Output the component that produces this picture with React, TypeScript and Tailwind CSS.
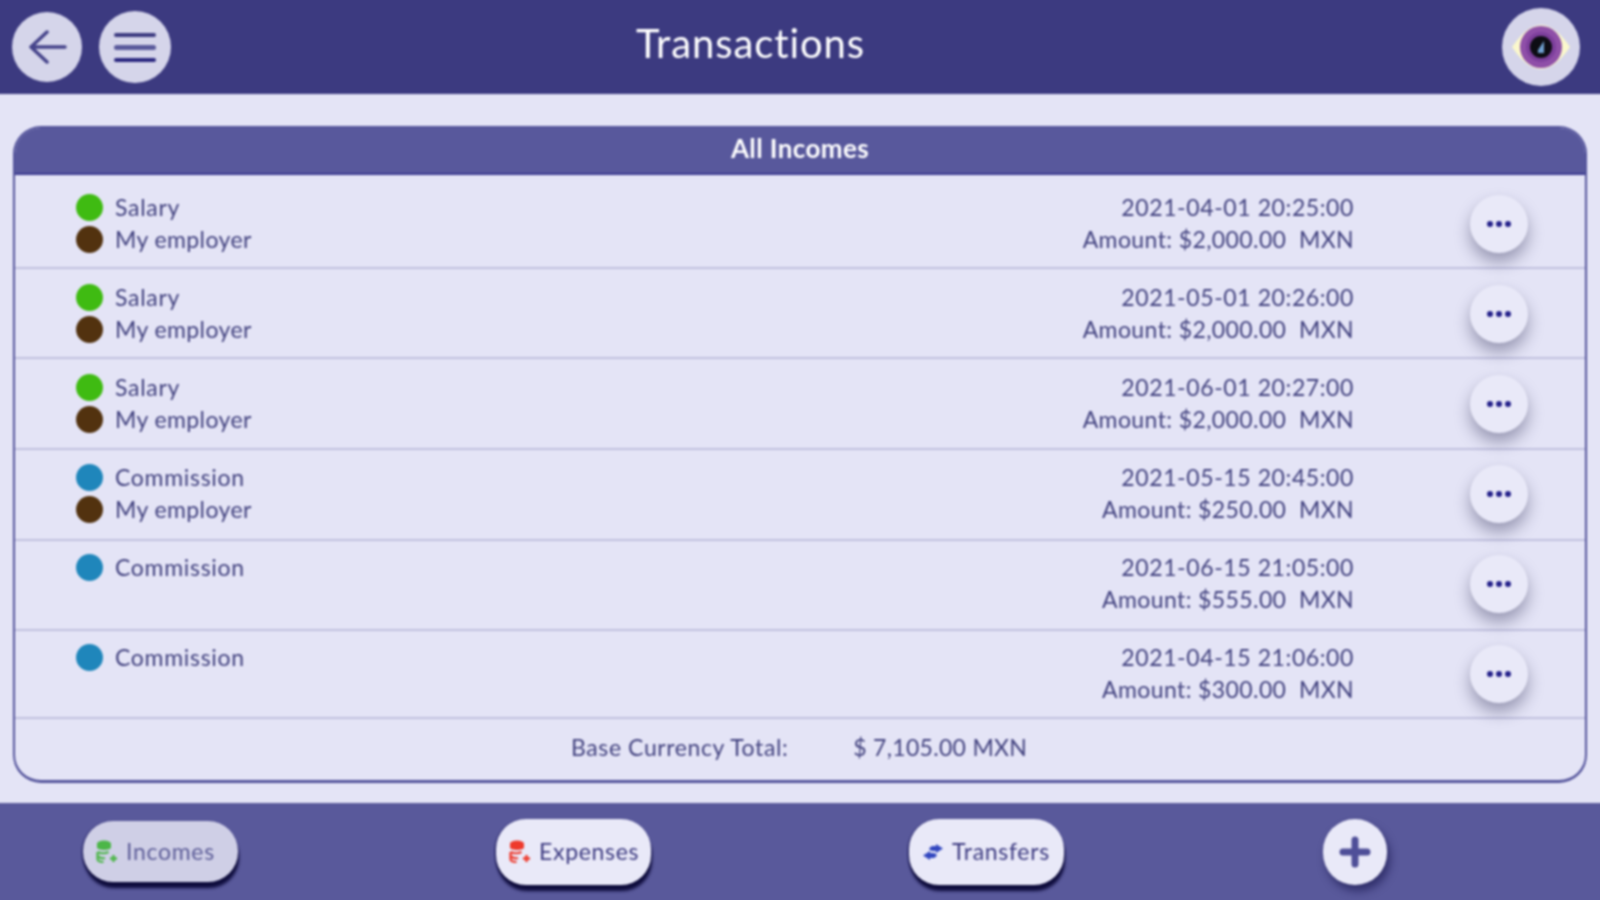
import React from "react"

const rows = [
  { cat: "Salary", dot: "bg-[#3fbb12]", who: "My employer", date: "2021-04-01 20:25:00", amount: "$2,000.00", box: "h-[94px] pt-[16px]" },
  { cat: "Salary", dot: "bg-[#3fbb12]", who: "My employer", date: "2021-05-01 20:26:00", amount: "$2,000.00", box: "h-[90px] pt-[12px]" },
  { cat: "Salary", dot: "bg-[#3fbb12]", who: "My employer", date: "2021-06-01 20:27:00", amount: "$2,000.00", box: "h-[91px] pt-[12px]" },
  { cat: "Commission", dot: "bg-[#1f86bb]", who: "My employer", date: "2021-05-15 20:45:00", amount: "$250.00", box: "h-[91px] pt-[11px]" },
  { cat: "Commission", dot: "bg-[#1f86bb]", who: "", date: "2021-06-15 21:05:00", amount: "$555.00", box: "h-[90px] pt-[10px]" },
  { cat: "Commission", dot: "bg-[#1f86bb]", who: "", date: "2021-04-15 21:06:00", amount: "$300.00", box: "h-[88px] pt-[10px]" },
]

function StackIcon({ color }: { color: string }) {
  return (
    <svg width="22" height="24" viewBox="0 0 22 24" fill="none">
      <ellipse cx="8" cy="3.5" rx="7" ry="3" fill={color} />
      <rect x="1" y="3.5" width="14" height="4" fill={color} />
      <ellipse cx="8" cy="7.5" rx="7" ry="2.5" fill={color} />
      <path d="M1.5 12c3 1.5 8 1.5 11 0M1.5 12v7c0 2 3 3 6 3M2 16.5c2 1.5 5 2 7 1.5" stroke={color} strokeWidth="2.2" />
      <path d="M14 18.5h7M17.5 15v7" stroke={color} strokeWidth="2.4" />
    </svg>
  )
}

function TransferIcon() {
  return (
    <svg width="22" height="18" viewBox="0 0 22 18" fill="#3348c0">
      <path d="M7 6c1-2.5 3-3 5-3h2V1l7 4.5L14 10V8h-2c-2 0-3 0-5-2Z" />
      <path d="M15 12c-1 2.5-3 3-5 3H8v2l-7-4.5L8 8v2h2c2 0 3 0 5 2Z" />
    </svg>
  )
}

function Eye() {
  return (
    <svg width="60" height="44" viewBox="0 0 60 44">
      <path d="M1 22C11 7 21 0 30 0s19 7 29 22C49 37 39 44 30 44S11 37 1 22Z" fill="#fbf8cc" />
      <circle cx="30" cy="22" r="21" fill="#8f4fa8" />
      <circle cx="30" cy="22" r="15" fill="#7d3f9c" />
      <circle cx="30" cy="22" r="11" fill="#0d0d14" />
      <path d="M27 25l6-9v12h-6z" fill="#6f9fd0" />
    </svg>
  )
}

function PillButton({ children, label, dim, className }: { children: React.ReactNode; label: string; dim?: boolean; className: string }) {
  return (
    <div
      className={`flex w-[155px] items-center gap-[8px] rounded-[30px] pl-[13px] shadow-[1px_6px_3px_#0e0c3c,-1px_1px_2px_#1e1c5c] ${dim ? "h-[61px] bg-[#cfcfe6] text-[#5d5d98]" : "h-[66px] bg-[#e9e9f8] text-[#3c3a80]"} ${className}`}
    >
      {children}
      <span className="text-[23px] tracking-[0.7px]">{label}</span>
    </div>
  )
}

export default function App() {
  return (
    <div className="h-[900px] w-[1600px] overflow-hidden">
      {/* 10px of bleed on every side so the soft filter does not fade at the page edge */}
      <div className="ml-[-10px] mt-[-10px] flex h-[920px] w-[1620px] flex-col bg-[#e4e4f6] font-['Lato',sans-serif] text-[#42427f] [font-variant-ligatures:none] blur-[0.8px]">
        <header className="flex h-[104px] items-center bg-[#3c3a80] pl-[22px] pt-[10px] text-white">
          <div className="flex h-[70px] w-[70px] items-center justify-center rounded-full bg-[#d5d5ea]">
            <svg className="ml-[2px]" width="38" height="34" viewBox="0 0 38 34" fill="none" stroke="#45438a" strokeWidth="3.5" strokeLinecap="round" strokeLinejoin="round">
              <path d="M36 17H2M18 2 2 17l16 15" />
            </svg>
          </div>
          <div className="ml-[17px] flex h-[72px] w-[72px] flex-col items-center justify-center gap-[8px] rounded-full bg-[#d5d5ea]">
            <div className="h-[4px] w-[42px] rounded-full bg-[#3c3a80]" />
            <div className="h-[5px] w-[42px] rounded-full bg-[#5a5a9c]" />
            <div className="h-[4px] w-[42px] rounded-full bg-[#2a2780]" />
          </div>
          <h1 className="ml-[465px] mt-[-8px] text-[40px] font-normal tracking-[0.9px]">Transactions</h1>
          <div className="ml-auto mr-[30px] flex h-[78px] w-[78px] items-center justify-center rounded-full bg-[#d5d5ea]">
            <Eye />
          </div>
        </header>

        <main className="mx-[23px] mt-[32px] h-[657px] rounded-[28px] border-2 border-b-[3px] border-[#55559c] bg-[#e4e4f6]">
          <div className="flex h-[47px] items-center justify-center rounded-t-[26px] border-b-2 border-[#3c3a90] bg-[#58589c] pb-[4px] text-[26px] font-bold tracking-[0.4px] text-white">
            All Incomes
          </div>
          {rows.map((r, i) => (
            <div key={i} className={`flex border-b-2 border-[#c0c0de] ${r.box}`}>
              <div className="ml-[61px] text-[23px] leading-[32px]">
                <div className="flex items-center gap-[12px] tracking-[0.7px]">
                  <span className={`h-[27px] w-[27px] rounded-full ${r.dot}`} />
                  {r.cat}
                </div>
                {r.who && (
                  <div className="flex items-center gap-[12px] tracking-[0.4px]">
                    <span className="h-[27px] w-[27px] rounded-full bg-[#52320f]" />
                    {r.who}
                  </div>
                )}
              </div>
              <div className="ml-auto text-right text-[23px] leading-[32px]">
                <div className="tracking-[0.6px]">{r.date}</div>
                <div className="tracking-[0.4px]">
                  Amount: {r.amount}&nbsp; MXN
                </div>
              </div>
              <div className="ml-[116px] mr-[57px] mt-[4px] flex h-[58px] w-[58px] items-center justify-center gap-[3px] rounded-full bg-[#e9e9f8] shadow-[0_9px_16px_rgba(40,40,80,0.4)]">
                <span className="h-[6px] w-[6px] rounded-full bg-[#24208a]" />
                <span className="h-[6px] w-[6px] rounded-full bg-[#24208a]" />
                <span className="h-[6px] w-[6px] rounded-full bg-[#24208a]" />
              </div>
            </div>
          ))}
          <div className="flex h-[56px] items-center text-[23px]">
            <span className="ml-[556px] tracking-[0.6px]">Base Currency Total:</span>
            <span className="ml-[65px] tracking-[0.3px]">$ 7,105.00 MXN</span>
          </div>
        </main>

        <footer className="mt-[20px] flex h-[107px] items-center bg-[#59599b] pb-[10px] pl-[10px]">
          <PillButton label="Incomes" dim className="ml-[83px]">
            <StackIcon color="#4cb648" />
          </PillButton>
          <PillButton label="Expenses" className="ml-[258px]">
            <StackIcon color="#ee3a2c" />
          </PillButton>
          <PillButton label="Transfers" className="ml-[258px]">
            <TransferIcon />
          </PillButton>
          <div className="ml-[259px] flex h-[66px] w-[64px] items-center justify-center rounded-full bg-[#e9e9f8] shadow-[3px_6px_8px_rgba(20,18,74,0.6)]">
            <svg width="32" height="32" viewBox="0 0 32 32" stroke="#4f4f98" strokeWidth="7" strokeLinecap="round">
              <path d="M16 4v24M4 16h24" />
            </svg>
          </div>
        </footer>
      </div>
    </div>
  )
}
